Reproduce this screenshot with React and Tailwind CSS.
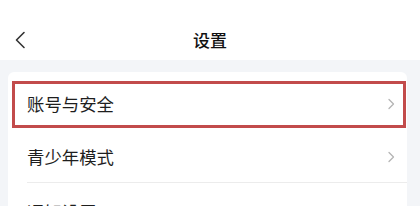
import React from "react";

function Chevron() {
  return (
    <svg width="8" height="12" viewBox="0 0 8 12" fill="none">
      <path d="M2 1.5 L6.5 6 L2 10.5" stroke="#b5b5b5" strokeWidth="1.3" strokeLinecap="round" strokeLinejoin="round" />
    </svg>
  );
}

function Row({ label, divider, extra = "" }) {
  return (
    <div className={`relative h-[52px] flex items-center pl-[19px] pr-[12px] ${extra}`}>
      <span className="flex-1 text-[17.4px] text-[#1e1e1e] leading-none">{label}</span>
      <Chevron />
      {divider && <div className="absolute left-[19px] right-0 bottom-0 h-px bg-[#ececec]" />}
    </div>
  );
}

export default function App() {
  return (
    <div
      className="w-[420px] h-[206px] overflow-hidden bg-[#f3f5f8]"
      style={{ fontFamily: '"Noto Sans CJK SC", "Noto Sans", sans-serif' }}
    >
      <div className="h-[60px] bg-white relative flex items-center justify-center pt-[18px]">
        <svg className="absolute left-[14px] top-[31px]" width="12" height="18" viewBox="0 0 12 18" fill="none">
          <path d="M10 1.5 L2.5 9 L10 16.5" stroke="#333" strokeWidth="1.6" strokeLinecap="round" strokeLinejoin="round" />
        </svg>
        <span className="text-[17px] font-medium text-[#111] leading-none">设置</span>
      </div>
      <div className="pt-[12px] pl-[8px] pr-[13px]">
        <div className="bg-white rounded-[6px] pt-[6px]">
          <div className="relative">
            <Row label="账号与安全" />
            <div className="absolute left-[4px] right-[1px] top-[3px] bottom-[2px] border-[3px] border-[#c24b4b]" />
          </div>
          <Row label="青少年模式" divider extra="h-[53px]" />
          <Row label="通知设置" extra="pt-[6px]" />
        </div>
      </div>
    </div>
  );
}
